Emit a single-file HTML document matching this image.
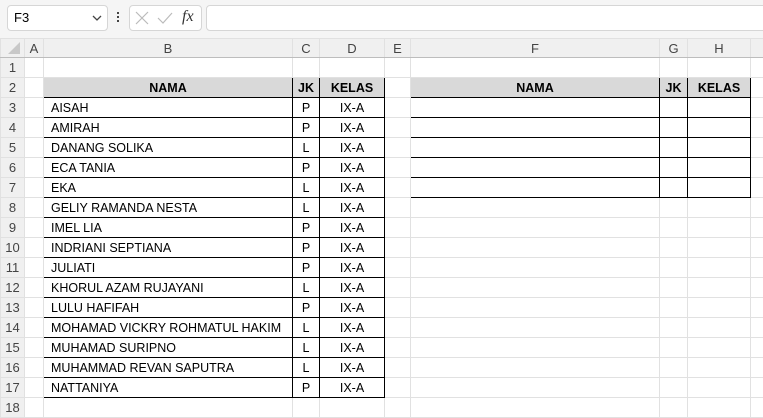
<!DOCTYPE html>
<html><head><meta charset="utf-8"><style>
body{margin:0;width:763px;height:407px;overflow:hidden;background:#fff;font-family:"Liberation Sans",sans-serif;font-size:12.5px;color:#000;position:relative}
.bar{position:absolute;left:0;top:0;width:763px;height:38px;background:#f5f5f5}
.nb{position:absolute;left:7px;top:5px;width:99px;height:24px;border:1px solid #d6d6d6;border-radius:4px;background:#fff}
.fxb{position:absolute;left:129px;top:5px;width:71px;height:24px;border:1px solid #d6d6d6;border-radius:4px;background:#fff}
.inp{position:absolute;left:206px;top:5px;width:570px;height:24px;border:1px solid #d6d6d6;border-radius:4px;background:#fff}
table{position:absolute;left:0;top:38px;border-collapse:collapse;table-layout:fixed;width:790px}
tr{height:20px}
td{height:19px;padding:0;border:1px solid #e1e1e1;white-space:nowrap;overflow:hidden;line-height:18px;font-size:12.5px}
tr.h{height:19px}
tr.h td{background:#f0f0f0;color:#444;text-align:center;height:18px;line-height:17px;border-color:#e1e1e1;border-bottom:1px solid #bdbdbd;font-size:13px}
td.r{background:#f0f0f0;color:#444;text-align:center;border-color:#e1e1e1;font-size:13px}
td.b{border:1px solid #000}
td.hd{background:#d9d9d9;font-weight:bold;text-align:center;border:1px solid #000}
td.c{text-align:center}
td.l{padding-left:7px}
</style></head><body>
<div class="bar">
<div class="nb"><span style="position:absolute;left:6px;top:4px;font-size:13px">F3</span>
<svg style="position:absolute;left:84px;top:9px" width="10" height="7"><path d="M1 1L5 5L9 1" fill="none" stroke="#444" stroke-width="1.3"/></svg></div>
<div style="position:absolute;left:117px;top:12px;width:2px;height:2px;background:#444;box-shadow:0 4px #444,0 8px #444"></div>
<div class="fxb">
<svg style="position:absolute;left:5px;top:5px" width="14" height="14"><path d="M1 1L13 13M13 1L1 13" stroke="#bbb" stroke-width="1.2"/></svg>
<svg style="position:absolute;left:27px;top:5px" width="16" height="14"><path d="M1 7L6 12L15 2" fill="none" stroke="#bbb" stroke-width="1.2"/></svg>
<span style="position:absolute;left:52px;top:2px;font-family:'Liberation Serif',serif;font-style:italic;font-size:16px;color:#333">fx</span></div>
<div class="inp"></div>
</div>
<table>
<colgroup><col style="width:24px"><col style="width:19px"><col style="width:249px"><col style="width:27px"><col style="width:65px"><col style="width:26px"><col style="width:249px"><col style="width:28px"><col style="width:63px"><col style="width:40px"></colgroup>
<tr class="h"><td style="background:#f0f0f0;position:relative"><svg style="position:absolute;left:6px;top:3px;display:block" width="14" height="12"><path d="M13 0L13 12L1 12Z" fill="#c8c8c8"/></svg></td><td>A</td><td>B</td><td>C</td><td>D</td><td>E</td><td>F</td><td>G</td><td>H</td><td></td></tr>
<tr><td class="r">1</td><td></td><td></td><td></td><td></td><td></td><td></td><td></td><td></td><td></td></tr>
<tr><td class="r">2</td><td></td><td class="hd">NAMA</td><td class="hd">JK</td><td class="hd">KELAS</td><td></td><td class="hd">NAMA</td><td class="hd">JK</td><td class="hd">KELAS</td><td></td></tr>
<tr><td class="r">3</td><td></td><td class="b l">AISAH</td><td class="b c">P</td><td class="b c">IX-A</td><td></td><td class="b"></td><td class="b"></td><td class="b"></td><td></td></tr>
<tr><td class="r">4</td><td></td><td class="b l">AMIRAH</td><td class="b c">P</td><td class="b c">IX-A</td><td></td><td class="b"></td><td class="b"></td><td class="b"></td><td></td></tr>
<tr><td class="r">5</td><td></td><td class="b l">DANANG SOLIKA</td><td class="b c">L</td><td class="b c">IX-A</td><td></td><td class="b"></td><td class="b"></td><td class="b"></td><td></td></tr>
<tr><td class="r">6</td><td></td><td class="b l">ECA TANIA</td><td class="b c">P</td><td class="b c">IX-A</td><td></td><td class="b"></td><td class="b"></td><td class="b"></td><td></td></tr>
<tr><td class="r">7</td><td></td><td class="b l">EKA</td><td class="b c">L</td><td class="b c">IX-A</td><td></td><td class="b"></td><td class="b"></td><td class="b"></td><td></td></tr>
<tr><td class="r">8</td><td></td><td class="b l">GELIY RAMANDA NESTA</td><td class="b c">L</td><td class="b c">IX-A</td><td></td><td></td><td></td><td></td><td></td></tr>
<tr><td class="r">9</td><td></td><td class="b l">IMEL LIA</td><td class="b c">P</td><td class="b c">IX-A</td><td></td><td></td><td></td><td></td><td></td></tr>
<tr><td class="r">10</td><td></td><td class="b l">INDRIANI SEPTIANA</td><td class="b c">P</td><td class="b c">IX-A</td><td></td><td></td><td></td><td></td><td></td></tr>
<tr><td class="r">11</td><td></td><td class="b l">JULIATI</td><td class="b c">P</td><td class="b c">IX-A</td><td></td><td></td><td></td><td></td><td></td></tr>
<tr><td class="r">12</td><td></td><td class="b l">KHORUL AZAM RUJAYANI</td><td class="b c">L</td><td class="b c">IX-A</td><td></td><td></td><td></td><td></td><td></td></tr>
<tr><td class="r">13</td><td></td><td class="b l">LULU HAFIFAH</td><td class="b c">P</td><td class="b c">IX-A</td><td></td><td></td><td></td><td></td><td></td></tr>
<tr><td class="r">14</td><td></td><td class="b l">MOHAMAD VICKRY ROHMATUL HAKIM</td><td class="b c">L</td><td class="b c">IX-A</td><td></td><td></td><td></td><td></td><td></td></tr>
<tr><td class="r">15</td><td></td><td class="b l">MUHAMAD SURIPNO</td><td class="b c">L</td><td class="b c">IX-A</td><td></td><td></td><td></td><td></td><td></td></tr>
<tr><td class="r">16</td><td></td><td class="b l">MUHAMMAD REVAN SAPUTRA</td><td class="b c">L</td><td class="b c">IX-A</td><td></td><td></td><td></td><td></td><td></td></tr>
<tr><td class="r">17</td><td></td><td class="b l">NATTANIYA</td><td class="b c">P</td><td class="b c">IX-A</td><td></td><td></td><td></td><td></td><td></td></tr>
<tr><td class="r">18</td><td></td><td></td><td></td><td></td><td></td><td></td><td></td><td></td><td></td></tr>
</table>
</body></html>
